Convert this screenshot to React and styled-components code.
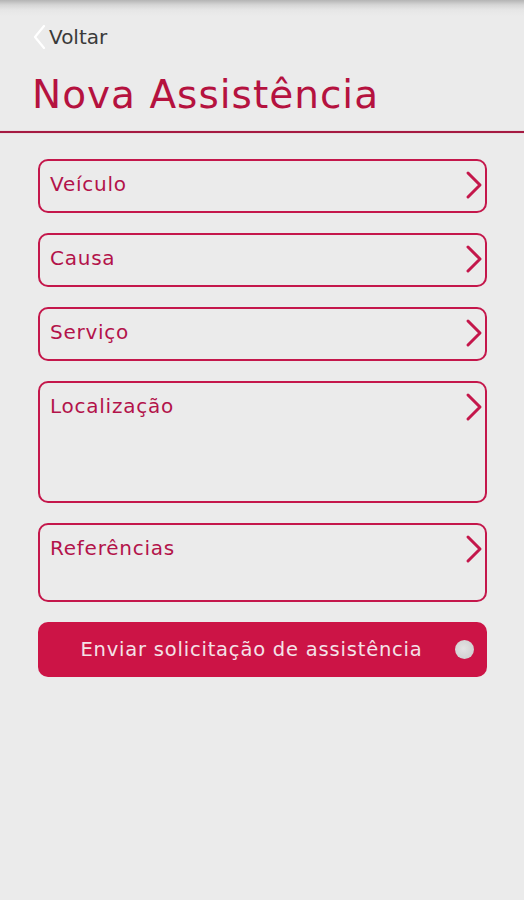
import React from 'react'
import { styled, createGlobalStyle } from 'styled-components'

const GlobalStyle = createGlobalStyle`
    html, body {
        margin: 0;
        padding: 0;
        background-color: #EBEBEB;
        font-family: 'DejaVu Sans', 'Noto Sans', sans-serif;
    }
`

const Screen = styled.div`
    min-height: 900px;
    background: linear-gradient(to bottom, #B4B4B4 0px, #D6D6D6 5px, #E6E6E6 10px, #EBEBEB 16px, #EBEBEB 100%);
`

const Header = styled.div`
    padding-top: 24px;
`

const BackLink = styled.div`
    display: flex;
    align-items: center;
    gap: 3px;
    padding-left: 33px;
    height: 26px;
    line-height: 26px;
    color: #3A3A3A;
    font-size: 20px;
`

const Title = styled.h1`
    margin: 0;
    padding: 20px 0 0 32px;
    color: #B5123F;
    font-size: 39px;
    font-weight: 400;
    letter-spacing: 1px;
    line-height: 50px;
`

const Divider = styled.div`
    height: 2px;
    margin-top: 11px;
    background-color: #A51A42;
    box-shadow: 0 0 1px rgba(165, 26, 66, 0.5);
`

const Form = styled.div`
    display: flex;
    flex-direction: column;
    gap: 20px;
    padding: 26px 37px 0 38px;
`

const Field = styled.div`
    display: flex;
    justify-content: space-between;
    align-items: flex-start;
    box-sizing: border-box;
    height: ${props => props.height}px;
    border: 2px solid #C4174B;
    border-radius: 10px;
    padding: 9px 2px 0 10px;
    color: #B3134A;
    font-size: 20px;
    letter-spacing: 0.75px;
`

const Label = styled.span`
    margin-top: 1px;
    line-height: 26px;
`

const SubmitButton = styled.div`
    position: relative;
    display: flex;
    align-items: center;
    justify-content: center;
    height: 55px;
    border-radius: 10px;
    background-color: #CC1446;
    color: #F4E2E8;
    font-size: 19.5px;
    letter-spacing: 0.8px;
    padding-right: 22px;
`

const Dot = styled.span`
    position: absolute;
    right: 13px;
    top: 18px;
    width: 19px;
    height: 19px;
    border-radius: 50%;
    background: radial-gradient(circle at 45% 45%, #E4E4E4 0%, #D2D2D2 70%, #C9C9C9 100%);
`

function Chevron() {
    return (
        <svg width="20" height="30" viewBox="0 0 20 30">
            <path d="M5 3 L17 15 L5 27" fill="none" stroke="#C4174B" strokeWidth="3" strokeLinecap="round" strokeLinejoin="round" />
        </svg>
    )
}

function BackChevron() {
    return (
        <svg width="13" height="24" viewBox="0 0 13 24">
            <path d="M11 1 L2 12 L11 23" fill="none" stroke="#FFFFFF" strokeWidth="2.2" strokeLinecap="round" strokeLinejoin="round" />
        </svg>
    )
}

const fields = [
    { label: 'Veículo', height: 54 },
    { label: 'Causa', height: 54 },
    { label: 'Serviço', height: 54 },
    { label: 'Localização', height: 122 },
    { label: 'Referências', height: 79 },
]

export default function App() {
    return (
        <Screen>
            <GlobalStyle />
            <Header>
                <BackLink>
                    <BackChevron />
                    Voltar
                </BackLink>
                <Title>Nova Assistência</Title>
            </Header>
            <Divider />
            <Form>
                {fields.map(f => (
                    <Field key={f.label} height={f.height}>
                        <Label>{f.label}</Label>
                        <Chevron />
                    </Field>
                ))}
                <SubmitButton>
                    Enviar solicitação de assistência
                    <Dot />
                </SubmitButton>
            </Form>
        </Screen>
    )
}
